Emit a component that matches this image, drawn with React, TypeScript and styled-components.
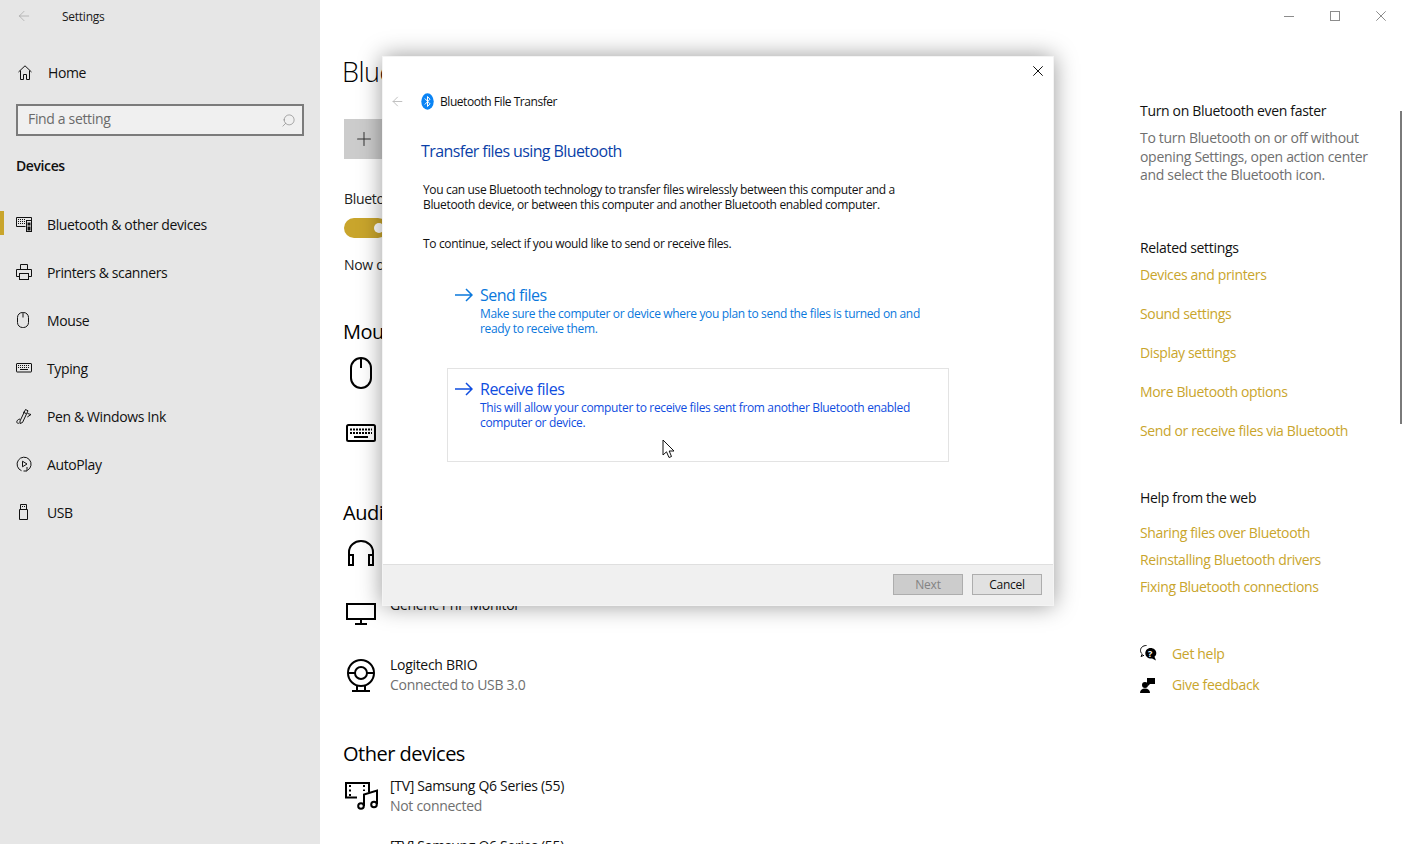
import React from 'react';
import styled, { createGlobalStyle } from 'styled-components';
import { ArrowLeft, Search, Plus } from 'lucide-react';

const GlobalStyle = createGlobalStyle`
  html, body { margin: 0; padding: 0; background: #fff; }
  body { font-family: "Open Sans", "Noto Sans", "Liberation Sans", sans-serif; color: #000; }
  * { box-sizing: border-box; }
`;

const GOLD = '#c9a52c';

const Page = styled.div`
  position: relative;
  display: flex;
  width: 1404px;
  height: 844px;
  overflow: hidden;
  background: #fff;
`;

const Sidebar = styled.nav`
  width: 320px;
  flex: none;
  background: #e6e6e6;
  display: flex;
  flex-direction: column;
`;

const TitleBar = styled.div`
  height: 32px;
  display: flex;
  align-items: center;
  padding-left: 16px;
  font-size: 12px;
  letter-spacing: -0.25px;
  color: #1a1a1a;
  svg { color: #a0a0a0; margin-right: 30px; }
`;

const HomeRow = styled.div`
  margin-top: 16px;
  height: 48px;
  display: flex;
  align-items: center;
  padding-left: 18px;
  gap: 16px;
  font-size: 14px;
  letter-spacing: -0.38px;
  color: #111;
`;

const SearchBox = styled.div`
  margin: 8px 16px 0;
  height: 32px;
  border: 2px solid #7b7b7b;
  background: #f0f0f0;
  display: flex;
  align-items: center;
  justify-content: space-between;
  padding: 0 6px 3px 10px;
  font-size: 14px;
  letter-spacing: -0.34px;
  color: #6a6a6a;
  svg { color: #7b7b7b; transform: scaleX(-1); margin-top: 3px; }
`;

const SectionLabel = styled.div`
  margin: 20px 0 24px 16px;
  height: 20px;
  line-height: 20px;
  font-size: 14px;
  font-weight: 600;
  letter-spacing: -0.4px;
  color: #111;
`;

const NavItem = styled.div<{ $active?: boolean }>`
  position: relative;
  height: 48px;
  display: flex;
  align-items: center;
  padding-left: 16px;
  font-size: 14px;
  letter-spacing: -0.38px;
  color: #111;
  &::before {
    content: '';
    display: ${(p) => (p.$active ? 'block' : 'none')};
    position: absolute;
    left: 0;
    top: 11px;
    width: 4px;
    height: 24px;
    background: ${GOLD};
  }
`;

const NavIcon = styled.span`
  width: 31px;
  flex: none;
  display: flex;
  align-items: center;
`;

const Main = styled.main`
  flex: 1;
  display: flex;
  min-width: 0;
`;

const Content = styled.section`
  width: 820px;
  flex: none;
  padding: 0 0 0 24px;
  overflow: hidden;
`;

const PageTitle = styled.h1`
  margin: 52px 0 0 -2px;
  height: 40px;
  line-height: 40px;
  font-size: 27px;
  font-weight: 300;
  letter-spacing: -0.5px;
  white-space: nowrap;
`;

const AddTile = styled.div`
  margin-top: 27px;
  width: 220px;
  height: 40px;
  background: #cccccc;
  display: flex;
  align-items: center;
  padding-left: 9px;
  color: #333;
`;

const SmallLabel = styled.div`
  margin-top: 30px;
  height: 20px;
  line-height: 20px;
  font-size: 14px;
  letter-spacing: -0.3px;
  color: #222;
  white-space: nowrap;
`;

const Toggle = styled.div`
  position: relative;
  margin-top: 9px;
  width: 44px;
  height: 20px;
  border-radius: 10px;
  background: ${GOLD};
  &::after {
    content: '';
    position: absolute;
    right: 4px;
    top: 5px;
    width: 10px;
    height: 10px;
    border-radius: 50%;
    background: #fff;
  }
`;

const StatusLine = styled(SmallLabel)`
  margin-top: 17px;
`;

const GroupTitle = styled.h2<{ $top: number }>`
  margin: ${(p) => p.$top}px 0 0 -1px;
  height: 28px;
  line-height: 28px;
  font-size: 20px;
  font-weight: 400;
  letter-spacing: -0.5px;
  white-space: nowrap;
`;

const DeviceRow = styled.div<{ $top?: number }>`
  margin-top: ${(p) => p.$top ?? 0}px;
  height: 60px;
  display: flex;
  align-items: center;
  gap: 12px;
`;

const DeviceIcon = styled.span`
  width: 34px;
  flex: none;
  display: flex;
  justify-content: center;
`;

const DeviceName = styled.div`
  font-size: 14px;
  line-height: 20px;
  letter-spacing: -0.3px;
  color: #111;
  white-space: nowrap;
`;

const DeviceStatus = styled(DeviceName)`
  color: #6f6f6f;
  min-height: 20px;
`;

const Aside = styled.aside`
  padding-top: 101px;
  width: 240px;
  display: flex;
  flex-direction: column;
  flex: none;
`;

const AsideHeading = styled.div<{ $top?: number }>`
  margin-top: ${(p) => p.$top ?? 0}px;
  height: 20px;
  line-height: 20px;
  font-size: 14px;
  letter-spacing: -0.33px;
  color: #111;
  white-space: nowrap;
`;

const AsideBody = styled.p`
  margin: 8px 0 0;
  font-size: 14px;
  line-height: 18.5px;
  letter-spacing: -0.3px;
  color: #6f6f6f;
  white-space: nowrap;
`;

const AsideLink = styled.a<{ $top: number }>`
  display: block;
  margin-top: ${(p) => p.$top}px;
  height: 20px;
  line-height: 20px;
  font-size: 14px;
  letter-spacing: -0.36px;
  color: ${GOLD};
  white-space: nowrap;
`;

const HelpLink = styled.div<{ $top: number }>`
  margin-top: ${(p) => p.$top}px;
  height: 20px;
  display: flex;
  align-items: center;
  font-size: 14px;
  letter-spacing: -0.33px;
  color: ${GOLD};
`;

const HelpSlot = styled.span`
  width: 32px;
  flex: none;
  display: flex;
  align-items: center;
`;

const WindowControls = styled.div`
  position: absolute;
  top: 0;
  right: 0;
  display: flex;
  align-items: center;
  height: 32px;
  color: #8c8c8c;
  padding-right: 18px;
  gap: 36px;
`;

const ScrollThumb = styled.div`
  position: absolute;
  left: 1400px;
  top: 111px;
  width: 2px;
  height: 313px;
  background: #7a7a7a;
`;

const Dialog = styled.div`
  position: absolute;
  left: 382px;
  top: 56px;
  width: 672px;
  height: 550px;
  background: #fff;
  border: 1px solid #f4f4f4;
  box-shadow: 0 0 22px rgba(0, 0, 0, 0.4);
  display: flex;
  flex-direction: column;
`;

const DialogClose = styled.div`
  height: 29px;
  display: flex;
  justify-content: flex-end;
  align-items: center;
  padding: 0 10px 1px 0;
  color: #111;
`;

const DialogHeader = styled.div`
  height: 30px;
  display: flex;
  align-items: center;
  padding-left: 7px;
  font-size: 12px;
  letter-spacing: -0.45px;
  color: #111;
  > svg:first-child { color: #bdbdbd; margin-right: 16px; }
  > svg:nth-child(2) { margin-right: 6px; }
`;

const DialogBody = styled.div`
  flex: 1;
  padding-left: 38px;
`;

const DialogHeading = styled.h3`
  margin: 24px 0 0;
  height: 22px;
  line-height: 22px;
  font-size: 16px;
  font-weight: 400;
  letter-spacing: -0.6px;
  color: #0b3fa8;
`;

const Paragraph = styled.p<{ $top: number }>`
  margin: ${(p) => p.$top}px 0 0 2px;
  font-size: 12px;
  line-height: 15px;
  letter-spacing: -0.345px;
  color: #111;
  white-space: pre-line;
`;

const Options = styled.div`
  margin-top: 23px;
  display: flex;
  flex-direction: column;
`;

const Option = styled.div<{ $hover?: boolean }>`
  width: 502px;
  height: 94px;
  margin-left: 26px;
  padding: 10px 6px 0 7px;
  display: flex;
  gap: 7px;
  border: 1px solid ${(p) => (p.$hover ? '#e3e3e3' : 'transparent')};
  color: ${(p) => (p.$hover ? '#0f4de0' : '#0a78dc')};
`;

const OptionArrow = styled.span`
  width: 18px;
  height: 20px;
  flex: none;
  display: flex;
  align-items: center;
`;

const OptionTitle = styled.div`
  height: 20px;
  line-height: 20px;
  font-size: 16px;
  letter-spacing: -0.5px;
`;

const OptionText = styled.div`
  margin-top: 1px;
  font-size: 12px;
  line-height: 15px;
  letter-spacing: -0.345px;
  white-space: pre-line;
`;

const DialogFooter = styled.div`
  height: 41px;
  flex: none;
  background: #f0f0f0;
  border-top: 1px solid #dfdfdf;
  display: flex;
  justify-content: flex-end;
  align-items: flex-start;
  gap: 9px;
  padding: 9px 11px 0 0;
`;

const FooterButton = styled.div<{ $disabled?: boolean }>`
  width: 70px;
  height: 21px;
  border: 1px solid #adadad;
  background: ${(p) => (p.$disabled ? '#cccccc' : '#e1e1e1')};
  color: ${(p) => (p.$disabled ? '#838383' : '#111')};
  font-size: 12px;
  letter-spacing: -0.25px;
  line-height: 19px;
  text-align: center;
`;

const Cursor = styled.svg`
  position: absolute;
  left: 662px;
  top: 439px;
`;

const ink = { fill: 'none', stroke: 'currentColor', strokeWidth: 1 } as const;

const HomeIcon = () => (
  <svg width="14" height="15" viewBox="0 0 14 15" {...ink}>
    <path d="M.5 7 7 .8 13.500 7" />
    <path d="M2.500 5.500v9h3v-5h3v5h3v-9" />
  </svg>
);

const BluetoothKeyboardIcon = () => (
  <svg width="16" height="16" viewBox="0 0 16 16" {...ink}>
    <path d="M9.500 10.500H.5v-9h15v3" />
    <path d="M2 3.500h8M2 5.500h8M2 7.500h7" strokeDasharray="1 1" />
    <rect x="10.500" y="4.500" width="5" height="11" />
    <rect x="12" y="7" width="2" height="2" fill="currentColor" />
    <rect x="12" y="11" width="2" height="3" fill="currentColor" />
  </svg>
);

const PrinterIcon = () => (
  <svg width="16" height="16" viewBox="0 0 16 16" {...ink}>
    <path d="M4.500 5V.5h7V5" />
    <path d="M3.500 12.500h-3V5.500h15v7h-3" />
    <rect x="3.500" y="9.500" width="9" height="6" />
  </svg>
);

const MouseIcon = () => (
  <svg width="13" height="16" viewBox="0 0 13 16" {...ink}>
    <rect x="1.500" y=".5" width="11" height="15" rx="5" />
    <path d="M7 .5v5" />
  </svg>
);

const KeyboardIcon = () => (
  <svg width="16" height="10" viewBox="0 0 16 10" {...ink}>
    <rect x=".5" y=".5" width="15" height="8.500" rx=".5" />
    <path d="M2 2.500h12M2 4.500h12" strokeDasharray="1 1" />
    <path d="M4 6.500h8" />
  </svg>
);

const PenIcon = () => (
  <svg width="16" height="17" viewBox="0 0 16 17" {...ink}>
    <path d="M4 13 9.500 1.500l2.500 1.300-5.500 11.700-2.500 1z" />
    <path d="M7 4l3 1.500" />
    <path d="M4 11c-2 .3-3.500 1.800-3.200 3.300.3 1 1.500 1.300 2.400.7" />
    <path d="M11.500 5.500l3.500 1-3.700 2.500" />
  </svg>
);

const AutoPlayIcon = () => (
  <svg width="16" height="16" viewBox="0 0 16 16" {...ink}>
    <path d="M5.500 14.700A7 7 0 1 1 11.500 14.300" />
    <path d="M6.500 5.200v5.600L11 8z" />
    <path d="M11 11v4H7.500" />
  </svg>
);

const UsbIcon = () => (
  <svg width="16" height="16" viewBox="0 0 16 16" {...ink}>
    <path d="M3.500 5.500h8v10h-8zM4.500 5.500v-5h6v5" />
    <path d="M6 2.500h1M8 2.500h1" />
  </svg>
);

const BluetoothBadge = () => (
  <svg width="13" height="17" viewBox="0 0 13 17">
    <ellipse cx="6.500" cy="8.500" rx="6.200" ry="8.300" fill="#0a84f5" />
    <path d="M3.800 5.500 9 10.800 6.500 13.500V3.500L9 6.200 3.800 11.500" fill="none" stroke="#fff" strokeWidth="1" />
  </svg>
);

const OptionArrowIcon = () => (
  <svg width="18" height="14" viewBox="0 0 18 14" fill="none" stroke="currentColor" strokeWidth="1.500">
    <path d="M0 7h17M11 1l6 6-6 6" />
  </svg>
);

const MouseLarge = () => (
  <svg width="24" height="32" viewBox="0 0 24 32" fill="none" stroke="#000" strokeWidth="2">
    <rect x="2" y="1" width="20" height="30" rx="10" />
    <path d="M12 1v10" />
  </svg>
);

const HeadphonesLarge = () => (
  <svg width="28" height="26" viewBox="0 0 28 26" fill="none" stroke="#000" strokeWidth="2">
    <path d="M2 18v-6a12 11 0 0 1 24 0v6" />
    <rect x="2" y="15" width="4" height="10" />
    <rect x="22" y="15" width="4" height="10" />
  </svg>
);

const KeyboardLarge = () => (
  <svg width="30" height="18" viewBox="0 0 30 18" fill="none" stroke="#000">
    <rect x="1" y="1" width="28" height="16" rx="1.500" strokeWidth="2" />
    <path d="M4 5.500h22M4 9h22" strokeWidth="2" strokeDasharray="2 1" />
    <path d="M8 13h14" strokeWidth="2" />
  </svg>
);

const MonitorLarge = () => (
  <svg width="30" height="24" viewBox="0 0 30 24" fill="none" stroke="#000" strokeWidth="2">
    <rect x="1" y="1" width="28" height="15" />
    <path d="M15 16v4M9 21h12" />
  </svg>
);

const WebcamLarge = () => (
  <svg width="30" height="33" viewBox="0 0 30 33" fill="none" stroke="#000" strokeWidth="2">
    <circle cx="15" cy="14" r="13" />
    <circle cx="15" cy="14" r="6" />
    <path d="M2 14h7M21 14h7M11 27v5M19 27v5M6 32h18" />
  </svg>
);

const MediaLarge = () => (
  <svg width="33" height="28" viewBox="0 0 33 28" fill="none" stroke="#000" strokeWidth="2">
    <path d="M12 15.500H1V1h23v9" />
    <path d="M5 3v11M19 3v6" strokeDasharray="2 2.500" />
    <path d="M19 24V12.500l13-4V22" />
    <circle cx="16" cy="24" r="2.800" />
    <circle cx="29" cy="22.500" r="2.800" />
  </svg>
);

const HelpIcon = () => (
  <svg width="17" height="17" viewBox="0 0 17 17">
    <path d="M6.500.5C3 .5.5 2.500.5 5.500c0 1.500.7 2.600 1.800 3.500L1 11.500l3-1.200" fill="none" stroke="#000" />
    <path d="M10.500 3c3.300 0 5.800 2.200 5.800 5.100 0 1.600-.7 2.900-1.800 3.700l1.500 3.700-3.900-2c-3.600.5-6.800-1.800-6.800-5.200C5.300 5.300 7.500 3 10.500 3z" fill="#000" />
    <text x="8" y="11.500" fontSize="9" fontWeight="700" fill="#fff" fontFamily="Open Sans">?</text>
  </svg>
);

const FeedbackIcon = () => (
  <svg width="16" height="16" viewBox="0 0 16 16" fill="#000">
    <circle cx="5" cy="8" r="3" />
    <path d="M0 16c0-3 2-4.500 5-4.500s5 1.500 5 4.500z" />
    <path d="M7 1h8v6H10L8 9V7H7z" />
  </svg>
);

const WindowMinimize = () => (
  <svg width="10" height="10" viewBox="0 0 10 10" {...ink}>
    <path d="M0 5.500h10" />
  </svg>
);

const WindowMaximize = () => (
  <svg width="10" height="10" viewBox="0 0 10 10" {...ink}>
    <rect x=".5" y=".5" width="9" height="9" />
  </svg>
);

const CrossIcon = ({ size = 10 }: { size?: number }) => (
  <svg width={size} height={size} viewBox="0 0 10 10" {...ink}>
    <path d="M.3.3l9.400 9.400M9.700.3.3 9.700" />
  </svg>
);

const navItems = [
  { label: 'Bluetooth & other devices', icon: <BluetoothKeyboardIcon />, active: true },
  { label: 'Printers & scanners', icon: <PrinterIcon /> },
  { label: 'Mouse', icon: <MouseIcon /> },
  { label: 'Typing', icon: <KeyboardIcon /> },
  { label: 'Pen & Windows Ink', icon: <PenIcon /> },
  { label: 'AutoPlay', icon: <AutoPlayIcon /> },
  { label: 'USB', icon: <UsbIcon /> },
];

const relatedLinks = [
  'Devices and printers',
  'Sound settings',
  'Display settings',
  'More Bluetooth options',
  'Send or receive files via Bluetooth',
];

const helpLinks = ['Sharing files over Bluetooth', 'Reinstalling Bluetooth drivers', 'Fixing Bluetooth connections'];

export default function App() {
  return (
    <Page>
      <GlobalStyle />
      <Sidebar>
        <TitleBar>
          <ArrowLeft size={16} strokeWidth={1} />
          Settings
        </TitleBar>
        <HomeRow>
          <HomeIcon />
          Home
        </HomeRow>
        <SearchBox>
          Find a setting
          <Search size={15} strokeWidth={1} />
        </SearchBox>
        <SectionLabel>Devices</SectionLabel>
        {navItems.map((item) => (
          <NavItem key={item.label} $active={item.active}>
            <NavIcon>{item.icon}</NavIcon>
            {item.label}
          </NavItem>
        ))}
      </Sidebar>

      <Main>
        <Content>
          <PageTitle>Bluetooth &amp; other devices</PageTitle>
          <AddTile>
            <Plus size={22} strokeWidth={1.1} />
          </AddTile>
          <SmallLabel>Bluetooth</SmallLabel>
          <Toggle />
          <StatusLine>Now discoverable as</StatusLine>
          <GroupTitle $top={43}>Mouse, keyboard, &amp; pen</GroupTitle>
          <DeviceRow $top={-3}>
            <DeviceIcon>
              <MouseLarge />
            </DeviceIcon>
          </DeviceRow>
          <DeviceRow>
            <DeviceIcon>
              <KeyboardLarge />
            </DeviceIcon>
          </DeviceRow>
          <GroupTitle $top={36}>Audio</GroupTitle>
          <DeviceRow $top={-4}>
            <DeviceIcon>
              <HeadphonesLarge />
            </DeviceIcon>
          </DeviceRow>
          <DeviceRow $top={2}>
            <DeviceIcon>
              <MonitorLarge />
            </DeviceIcon>
            <div>
              <DeviceName>Generic PnP Monitor</DeviceName>
              <DeviceStatus />
            </div>
          </DeviceRow>
          <DeviceRow>
            <DeviceIcon>
              <WebcamLarge />
            </DeviceIcon>
            <div>
              <DeviceName>Logitech BRIO</DeviceName>
              <DeviceStatus>Connected to USB 3.0</DeviceStatus>
            </div>
          </DeviceRow>
          <GroupTitle $top={35}>Other devices</GroupTitle>
          <DeviceRow $top={-2}>
            <DeviceIcon>
              <MediaLarge />
            </DeviceIcon>
            <div>
              <DeviceName>[TV] Samsung Q6 Series (55)</DeviceName>
              <DeviceStatus>Not connected</DeviceStatus>
            </div>
          </DeviceRow>
          <DeviceRow>
            <DeviceIcon />
            <div>
              <DeviceName>[TV] Samsung Q6 Series (55)</DeviceName>
              <DeviceStatus>Not connected</DeviceStatus>
            </div>
          </DeviceRow>
        </Content>

        <Aside>
          <AsideHeading>Turn on Bluetooth even faster</AsideHeading>
          <AsideBody>
            To turn Bluetooth on or off without
            <br />
            opening Settings, open action center
            <br />
            and select the Bluetooth icon.
          </AsideBody>
          <AsideHeading $top={53}>Related settings</AsideHeading>
          {relatedLinks.map((link, i) => (
            <AsideLink key={link} $top={i === 0 ? 7 : 19}>
              {link}
            </AsideLink>
          ))}
          <AsideHeading $top={47}>Help from the web</AsideHeading>
          {helpLinks.map((link, i) => (
            <AsideLink key={link} $top={i === 0 ? 15 : 7}>
              {link}
            </AsideLink>
          ))}
          <HelpLink $top={47}>
            <HelpSlot>
              <HelpIcon />
            </HelpSlot>
            Get help
          </HelpLink>
          <HelpLink $top={11}>
            <HelpSlot>
              <FeedbackIcon />
            </HelpSlot>
            Give feedback
          </HelpLink>
        </Aside>
      </Main>

      <WindowControls>
        <WindowMinimize />
        <WindowMaximize />
        <CrossIcon />
      </WindowControls>
      <ScrollThumb />

      <Dialog>
        <DialogClose>
          <CrossIcon size={10} />
        </DialogClose>
        <DialogHeader>
          <ArrowLeft size={15} strokeWidth={1.5} />
          <BluetoothBadge />
          Bluetooth File Transfer
        </DialogHeader>
        <DialogBody>
          <DialogHeading>Transfer files using Bluetooth</DialogHeading>
          <Paragraph $top={20}>
            {'You can use Bluetooth technology to transfer files wirelessly between this computer and a\nBluetooth device, or between this computer and another Bluetooth enabled computer.'}
          </Paragraph>
          <Paragraph $top={24}>To continue, select if you would like to send or receive files.</Paragraph>
          <Options>
            <Option>
              <OptionArrow>
                <OptionArrowIcon />
              </OptionArrow>
              <div>
                <OptionTitle>Send files</OptionTitle>
                <OptionText>
                  {'Make sure the computer or device where you plan to send the files is turned on and\nready to receive them.'}
                </OptionText>
              </div>
            </Option>
            <Option $hover>
              <OptionArrow>
                <OptionArrowIcon />
              </OptionArrow>
              <div>
                <OptionTitle>Receive files</OptionTitle>
                <OptionText>
                  {'This will allow your computer to receive files sent from another Bluetooth enabled\ncomputer or device.'}
                </OptionText>
              </div>
            </Option>
          </Options>
        </DialogBody>
        <DialogFooter>
          <FooterButton $disabled>Next</FooterButton>
          <FooterButton>Cancel</FooterButton>
        </DialogFooter>
      </Dialog>

      <Cursor width="13" height="20" viewBox="0 0 13 20">
        <path d="M1 1v15l3.500-3.200L7 18.500l2.500-1-2.300-5.500H12z" fill="#fff" stroke="#111" strokeWidth="1" />
      </Cursor>
    </Page>
  );
}
